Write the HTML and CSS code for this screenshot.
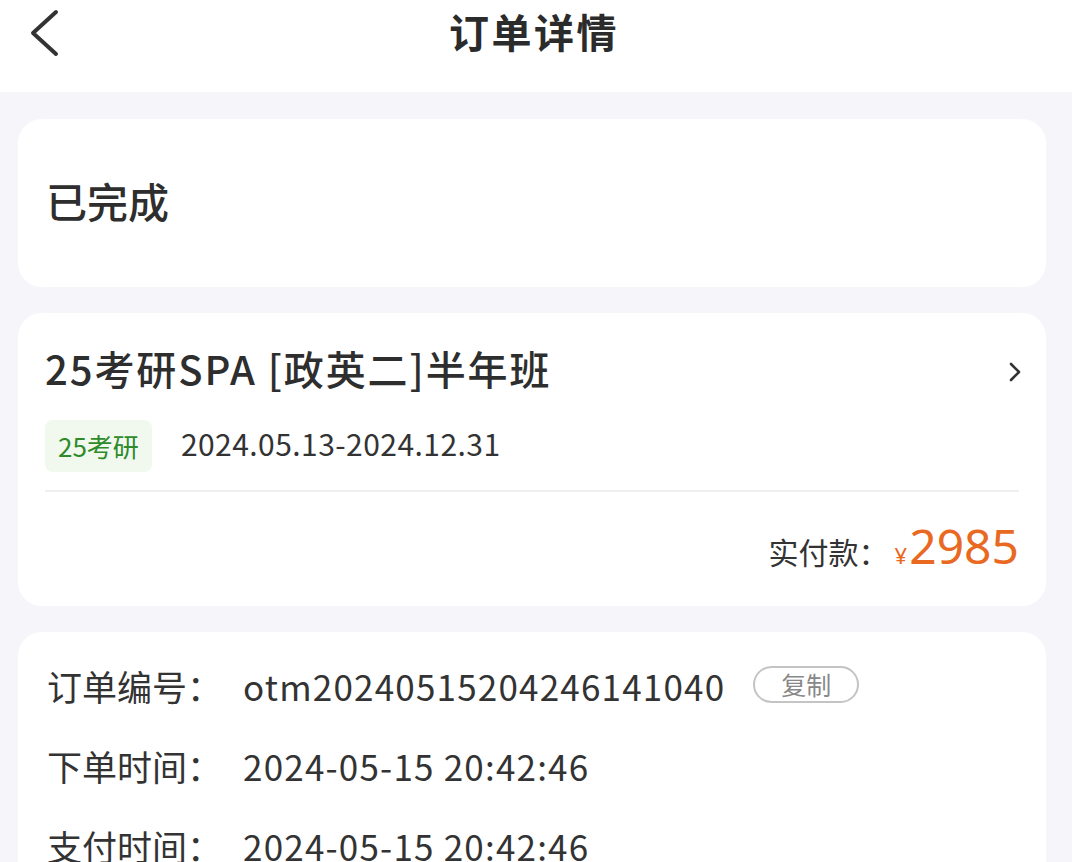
FILE: index.html
```html
<!DOCTYPE html>
<html lang="zh">
<head>
<meta charset="utf-8">
<title>订单详情</title>
<link rel="stylesheet" href="styles.css">
</head>
<body>
<div class="page">
  <header class="nav">
    <svg class="back" width="40" height="60" viewBox="0 0 40 60"><path d="M34 10 L11 31 L34 52" fill="none" stroke="#333" stroke-width="4" stroke-linecap="round" stroke-linejoin="round"/></svg>
    <h1 class="nav-title">订单详情</h1>
  </header>
  <main class="content">
    <section class="card status">已完成</section>
    <section class="card product">
      <div class="prod-head">
        <div class="prod-title">25考研SPA [政英二]半年班</div>
        <svg class="chev" width="16" height="24" viewBox="0 0 16 24"><path d="M4 4 L12 12 L4 20" fill="none" stroke="#333" stroke-width="2.6" stroke-linecap="round" stroke-linejoin="round"/></svg>
      </div>
      <div class="prod-meta">
        <span class="tag">25考研</span>
        <span class="dates">2024.05.13-2024.12.31</span>
      </div>
      <div class="divider"></div>
      <div class="pay">
        <span class="pay-label">实付款：</span>
        <span class="price"><span class="yen">¥</span>2985</span>
      </div>
    </section>
    <section class="card info">
      <div class="row"><span class="lbl">订单编号：</span><span class="val">otm20240515204246141040</span><span class="copy">复制</span></div>
      <div class="row"><span class="lbl">下单时间：</span><span class="val">2024-05-15 20:42:46</span></div>
      <div class="row"><span class="lbl">支付时间：</span><span class="val">2024-05-15 20:42:46</span></div>
    </section>
  </main>
</div>
</body>
</html>
```
FILE: styles.css
```css
* { box-sizing: border-box; margin: 0; padding: 0; }
html, body { width: 1072px; height: 862px; overflow: hidden; }
body {
  background: #f6f6fa;
  font-family: "Noto Sans CJK SC", "Noto Sans", sans-serif;
  color: #333;
}
.nav {
  height: 92px;
  background: #fff;
  display: flex;
  align-items: flex-start;
  justify-content: center;
  position: relative;
}
.back { position: absolute; left: 22px; top: 2px; }
.nav-title {
  font-size: 40px;
  font-weight: 700;
  line-height: 62px;
  color: #2b2b2b;
  letter-spacing: 2.5px;
  margin-left: -4px;
}
.content {
  padding: 27px 26px 0 18px;
  display: flex;
  flex-direction: column;
  gap: 26px;
}
.card {
  background: #fff;
  border-radius: 24px;
}
.status {
  height: 168px;
  display: flex;
  align-items: center;
  padding-left: 28px;
  padding-bottom: 6px;
  font-size: 41px;
  font-weight: 500;
  color: #2e2e2e;
}
.product {
  height: 293px;
  padding: 24px 27px 0 27px;
}
.prod-head {
  display: flex;
  align-items: center;
  justify-content: space-between;
  height: 62px;
}
.prod-title {
  font-size: 40px;
  font-weight: 500;
  color: #2e2e2e;
  letter-spacing: 1.9px;
}
.chev { margin-right: -4px; margin-top: 8px; }
.prod-meta {
  display: flex;
  align-items: center;
  gap: 29px;
  margin-top: 21px;
}
.tag {
  background: #f1f9ef;
  color: #2f8a2a;
  font-size: 26px;
  padding: 0 13px;
  height: 52px;
  line-height: 52px;
  border-radius: 8px;
}
.dates {
  font-size: 30px;
  color: #333;
  margin-top: -6px;
  letter-spacing: 0.45px;
}
.divider {
  height: 2px;
  background: #efefef;
  margin-top: 18px;
}
.pay {
  display: flex;
  justify-content: flex-end;
  align-items: baseline;
  margin-top: 24px;
}
.pay-label { font-size: 30px; color: #333; }
.price {
  font-family: "Noto Sans", sans-serif;
  font-size: 48px;
  color: #e8691f;
  line-height: 60px;
  margin-left: 6px;
}
.yen { font-size: 22px; margin-right: 2px; }
.info {
  height: 300px;
  padding: 13px 29px 0 29px;
}
.row {
  display: flex;
  align-items: center;
  height: 80px;
  font-size: 35px;
  color: #333;
}
.lbl { width: 196px; }
.val { letter-spacing: 1.2px; }
.copy {
  margin-left: 28px;
  border: 2px solid #c4c4c4;
  border-radius: 20px;
  font-size: 25px;
  color: #888;
  padding: 0 26px;
  height: 37px;
  line-height: 33px;
  margin-top: -2px;
}
```
